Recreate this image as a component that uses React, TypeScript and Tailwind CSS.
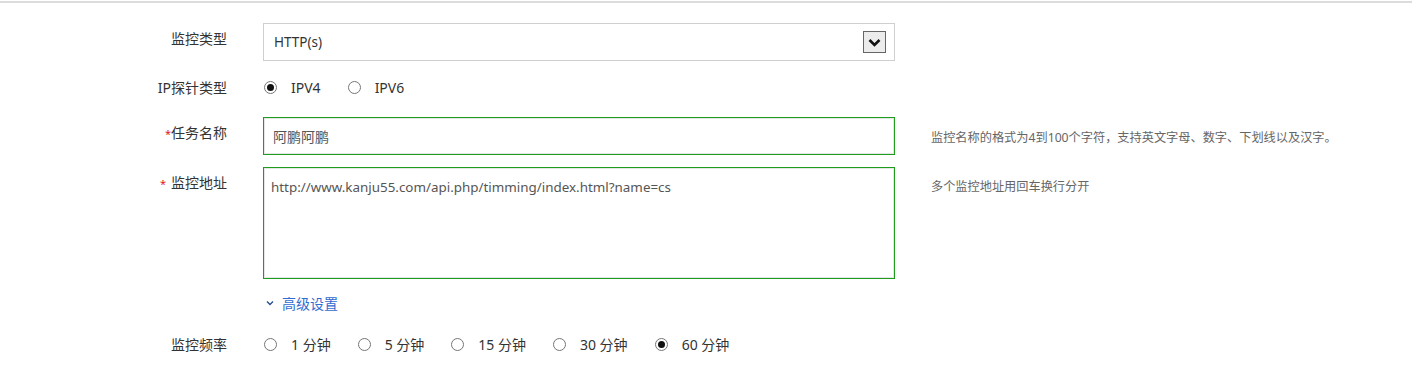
const FONT = "font-['Noto_Sans','Noto_Sans_CJK_SC',sans-serif]";

function Radio({ checked, label }: { checked?: boolean; label: string }) {
  return (
    <label className="flex items-center mr-[27px]">
      <span className="w-[13px] h-[13px] rounded-full border border-[#767676] bg-white flex items-center justify-center">
        {checked && <span className="w-[7px] h-[7px] rounded-full bg-[#111]" />}
      </span>
      <span className="ml-[14px] text-[14px] text-[#333]">{label}</span>
    </label>
  );
}

function Label({ children, req, space }: { children: string; req?: boolean; space?: boolean }) {
  return (
    <div className="text-right text-[14px] leading-5 text-[#333] pt-[6px]">
      {req && <span className={`text-[#e02020] text-[11px] ${space ? 'mr-[5px]' : ''}`}>*</span>}
      {children}
    </div>
  );
}

export default function App() {
  const freqs = ['1 分钟', '5 分钟', '15 分钟', '30 分钟', '60 分钟'];
  return (
    <div className={`w-[1412px] h-[367px] bg-white ${FONT}`}>
      <div className="mt-px h-[2px] bg-[#dcdcdc]" />

      <div className="grid grid-cols-[227px_632px_1fr] gap-x-[36px] mt-[20px]">
        {/* 监控类型 */}
        <Label>监控类型</Label>
        <div className="h-[38px] border border-[#cfcfcf] flex items-center justify-between pl-[10px] pr-[8px]">
          <span className="text-[13.5px] text-[#333]">HTTP(s)</span>
          <span className="w-[23px] h-[22px] border border-[#666] bg-[#ececec] flex items-center justify-center">
            <svg width="13" height="9" viewBox="0 0 13 9">
              <path d="M1.5 2 L6.5 7 L11.5 2" fill="none" stroke="#111" strokeWidth="2.6" />
            </svg>
          </span>
        </div>
        <div />

        {/* IP探针类型 */}
        <div className="mt-[11px] h-[30px] flex items-center justify-end text-[14px] text-[#333]">IP探针类型</div>
        <div className="mt-[11px] h-[30px] flex items-center pl-px">
          <Radio checked label="IPV4" />
          <Radio label="IPV6" />
        </div>
        <div />

        {/* 任务名称 */}
        <div className="mt-[15px]">
          <Label req>任务名称</Label>
        </div>
        <div className="mt-[15px] h-[38px] border border-[#1d9c1d] shadow-[inset_0_0_0_1px_#e6e6e6] flex items-center pl-[9px]">
          <span className="text-[14px] text-[#555]">阿鹏阿鹏</span>
        </div>
        <div className="mt-[15px] pt-[13px] text-[12.2px] leading-4 text-[#666]">
          监控名称的格式为4到100个字符，支持英文字母、数字、下划线以及汉字。
        </div>

        {/* 监控地址 */}
        <div className="mt-[12px]">
          <Label req space>监控地址</Label>
        </div>
        <div className="mt-[12px] h-[112px] border border-[#1d9c1d] shadow-[inset_0_0_0_1px_#e6e6e6] pl-[7px] pt-[6px]">
          <span className="text-[13.4px] leading-5 text-[#555]">http://www.kanju55.com/api.php/timming/index.html?name=cs</span>
        </div>
        <div className="mt-[12px] pt-[12px] text-[12.2px] leading-4 text-[#666]">多个监控地址用回车换行分开</div>

        {/* 高级设置 */}
        <div />
        <div className="mt-[12px] h-[24px] flex items-center pl-[3px]">
          <svg width="8" height="6" viewBox="0 0 8 6">
            <path d="M1 1.5 L4 4.5 L7 1.5" fill="none" stroke="#2b4f8f" strokeWidth="1.4" />
          </svg>
          <span className="ml-[8px] text-[14px] text-[#2f6cd0]">高级设置</span>
        </div>
        <div />

        {/* 监控频率 */}
        <div className="mt-[17px] h-[24px] flex items-center justify-end text-[14px] text-[#333]">监控频率</div>
        <div className="mt-[17px] h-[24px] flex items-center pl-px">
          {freqs.map((f) => (
            <Radio key={f} label={f} checked={f === '60 分钟'} />
          ))}
        </div>
        <div />
      </div>
    </div>
  );
}
